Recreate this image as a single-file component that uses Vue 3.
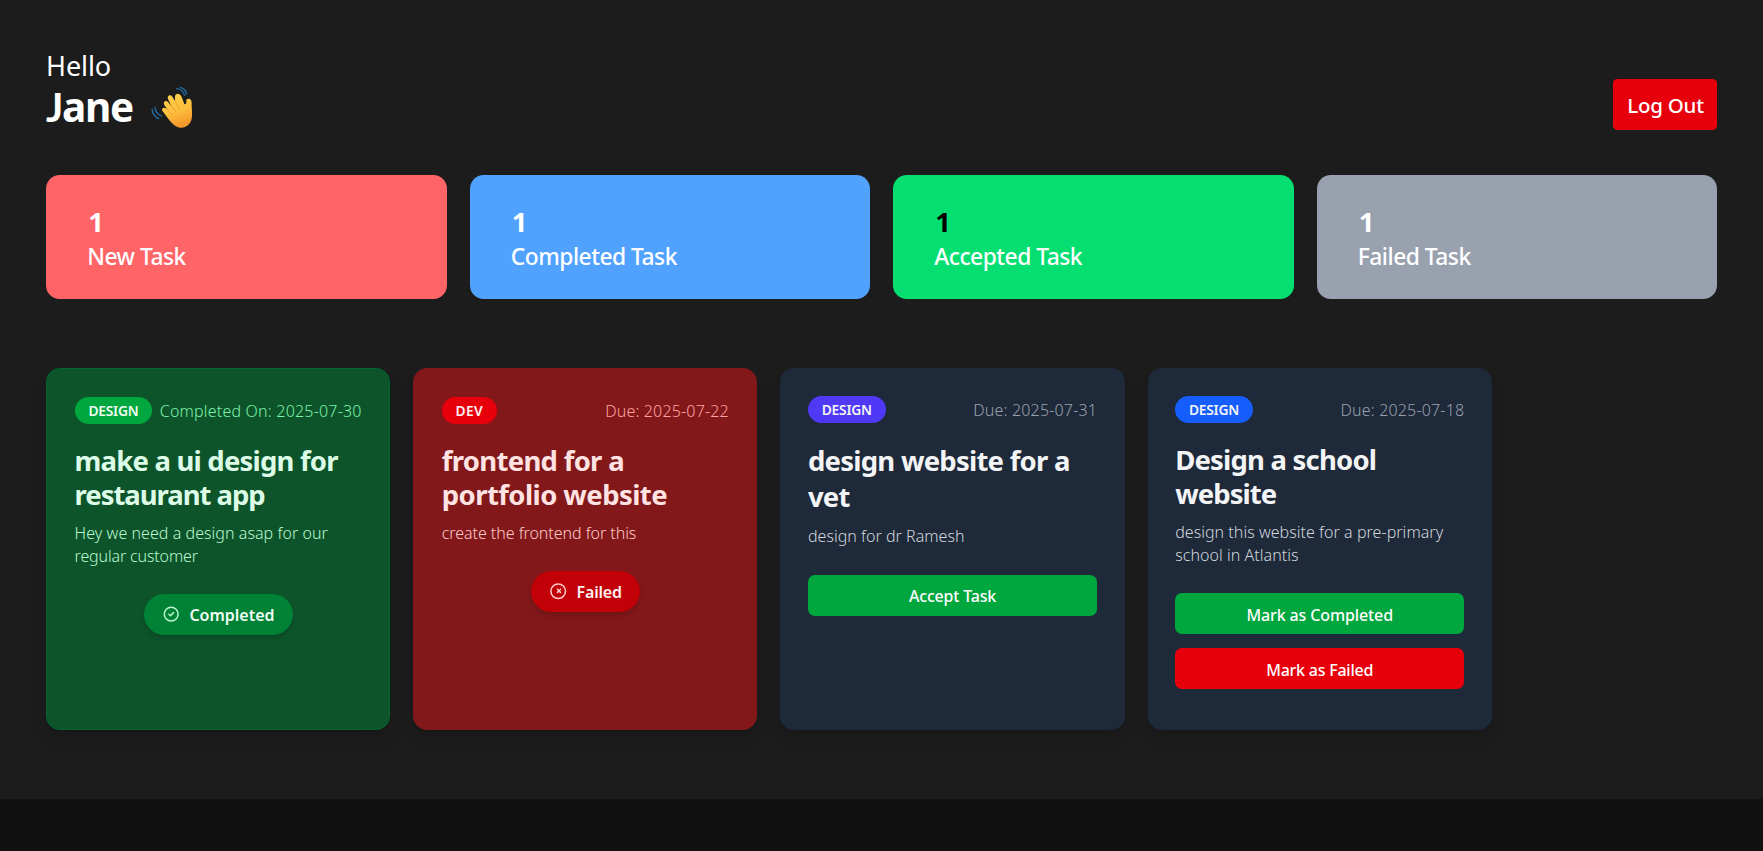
<script setup>
const stats = [
  { tone: 'coral', count: 1, label: 'New Task' },
  { tone: 'sky', count: 1, label: 'Completed Task' },
  { tone: 'lime', count: 1, label: 'Accepted Task' },
  { tone: 'slate', count: 1, label: 'Failed Task' },
]

// Each line of text carries its own tracking, in pixels.
const tasks = [
  {
    tone: 'completed',
    tag: 'DESIGN',
    tagTrack: -0.25,
    date: 'Completed On: 2025-07-30',
    dateTrack: 0.2,
    title: [['make a ui design for', -0.8], ['restaurant app', -1.05]],
    text: [['Hey we need a design asap for our', 0.05], ['regular customer', -0.15]],
    status: 'Completed',
    statusTrack: 0,
  },
  {
    tone: 'failed',
    tag: 'DEV',
    tagTrack: 0.35,
    date: 'Due: 2025-07-22',
    dateTrack: 0.17,
    title: [['frontend for a', -0.7], ['portfolio website', -0.58]],
    text: [['create the frontend for this', -0.05]],
    status: 'Failed',
    statusTrack: -0.2,
  },
  {
    tone: 'fresh',
    tag: 'DESIGN',
    tagTrack: -0.25,
    date: 'Due: 2025-07-31',
    dateTrack: 0.17,
    title: [['design website for a', -0.76], ['vet', -0.8]],
    text: [['design for dr Ramesh', 0.02]],
    actions: [{ label: 'Accept Task', kind: 'ok', track: -0.2 }],
  },
  {
    tone: 'active',
    tag: 'DESIGN',
    tagTrack: -0.25,
    date: 'Due: 2025-07-18',
    dateTrack: 0.17,
    title: [['Design a school', -0.8], ['website', -0.95]],
    text: [['design this website for a pre-primary', 0.04], ['school in Atlantis', 0.05]],
    actions: [
      { label: 'Mark as Completed', kind: 'ok', track: -0.12 },
      { label: 'Mark as Failed', kind: 'bad', track: -0.22 },
    ],
  },
]

const track = (px) => ({ letterSpacing: px + 'px' })
</script>

<template>
  <main class="dashboard">
    <header class="header">
      <div class="greeting">
        <p class="hello">Hello</p>
        <div class="who">
          <h1 class="name">Jane</h1>
          <svg class="wave" viewBox="0 0 126 126" aria-hidden="true">
            <defs>
              <linearGradient id="skin" x1="0" y1="0" x2="0.3" y2="1">
                <stop offset="0" stop-color="#ffd04c" />
                <stop offset="0.6" stop-color="#fdbf3e" />
                <stop offset="1" stop-color="#f59a2c" />
              </linearGradient>
            </defs>
            <g fill="none" stroke="#1f6ea8" stroke-width="4" stroke-linecap="round">
              <path d="M77 8 Q95 10 101 28" />
              <path d="M88 4 Q105 10 107 24" />
              <path d="M12 64 Q14 83 31 90" />
              <path d="M3 70 Q6 90 23 98" />
            </g>
            <path
              fill="url(#skin)"
              d="M35 76 C30 69 37 61 45 67 L49 70 L40 57 C35 49 44 41 51 48 L61 60 L51 39 C47 29 58 23 64 32
                 L72 45 L72 33 C72 21 86 20 91 31 L100 54 C104 56 106 53 106 49 C104 39 110 37 116 39
                 C123 42 122 50 122 57 C122 69 124 78 123 91 C122 113 107 126 89 125
                 C75 124 66 115 57 105 Z"
            />
            <g fill="none" stroke="#e48f24" stroke-width="2.5" stroke-linecap="round" opacity="0.75">
              <path d="M49 70 L62 86" />
              <path d="M61 60 L74 77" />
              <path d="M72 45 L86 69" />
            </g>
          </svg>
        </div>
      </div>
      <button class="logout">Log Out</button>
    </header>

    <section class="stats">
      <article v-for="s in stats" :key="s.label" class="stat" :class="s.tone">
        <h2 class="count">{{ s.count }}</h2>
        <h3 class="label">{{ s.label }}</h3>
      </article>
    </section>

    <section class="tasks">
      <article v-for="(t, i) in tasks" :key="i" class="task" :class="t.tone">
        <div class="meta">
          <span class="tag" :style="track(t.tagTrack)">{{ t.tag }}</span>
          <span class="date" :style="track(t.dateTrack)">{{ t.date }}</span>
        </div>
        <h2 class="title">
          <span v-for="l in t.title" :key="l[0]" :style="track(l[1])">{{ l[0] }}</span>
        </h2>
        <p class="text">
          <span v-for="l in t.text" :key="l[0]" :style="track(l[1])">{{ l[0] }}</span>
        </p>
        <div v-if="t.status" class="status">
          <svg v-if="t.tone === 'completed'" class="icon" viewBox="0 0 24 24">
            <circle cx="12" cy="12" r="9" />
            <path d="M9 12l2 2 4-4" />
          </svg>
          <svg v-else class="icon" viewBox="0 0 24 24">
            <circle cx="12" cy="12" r="9.5" />
            <path d="M11 9.5l4 4M15 9.5l-4 4" />
          </svg>
          <span :style="track(t.statusTrack)">{{ t.status }}</span>
        </div>
        <div v-if="t.actions" class="actions">
          <button
            v-for="a in t.actions"
            :key="a.label"
            class="action"
            :class="a.kind"
            :style="track(a.track)"
          >{{ a.label }}</button>
        </div>
      </article>
    </section>
  </main>
</template>

<style>
body {
  background: #111;
}
</style>

<style scoped>
.dashboard {
  box-sizing: border-box;
  height: 799px;
  padding: 46px;
  background: #1c1c1c;
  color: #fff;
  font-family: 'Noto Sans', 'Open Sans', sans-serif;
}
h1, h2, h3, p { margin: 0; }
button {
  border: 0;
  color: #fff;
  font-family: inherit;
}

.header {
  display: flex;
  align-items: flex-end;
  justify-content: space-between;
  height: 83.5px;
}
.hello {
  font-size: 27px;
  line-height: 37px;
  letter-spacing: -0.1px;
}
.who {
  display: flex;
}
.name {
  width: 105px;
  font-size: 40.5px;
  font-weight: 700;
  line-height: 46px;
  letter-spacing: -1.3px;
}
.name::first-letter {
  font-family: Lato, sans-serif;
}
.wave {
  width: 42px;
  height: 42px;
  margin-top: 2.5px;
}
.logout {
  width: 104px;
  height: 51px;
  padding: 1px 0 0 1px;
  border-radius: 4.5px;
  background: #e7000b;
  font-size: 20.5px;
  font-weight: 500;
  letter-spacing: -0.25px;
}

.stats {
  display: grid;
  grid-template-columns: repeat(4, 1fr);
  gap: 23px;
  margin-top: 45.5px;
}
.stat {
  box-sizing: border-box;
  height: 124px;
  padding: 29px 41.3px 0;
  border-radius: 13.8px;
}
.coral { background: #ff6467; }
.sky { background: #51a2ff; }
.lime { background: #05df72; }
.slate { background: #99a1af; }
.count {
  padding-left: 1px;
  font-size: 27.5px;
  font-weight: 700;
  line-height: 36.7px;
}
.lime .count { color: #000; }
.label {
  font-size: 22.8px;
  font-weight: 500;
  line-height: 32.1px;
  letter-spacing: -0.5px;
}

.tasks {
  display: flex;
  gap: 22.9px;
  margin-top: 69px;
}
.task {
  box-sizing: border-box;
  width: 344.3px;
  height: 362px;
  padding: 27.6px;
  border-radius: 13.8px;
  background: #1e2939;
  box-shadow: 0 11px 17px -3px rgba(0, 0, 0, 0.1), 0 4px 7px -4px rgba(0, 0, 0, 0.1);
}
.task.completed {
  border: 1px solid #016630;
  background: #0d542b;
  color: #b9f8cf;
}
.task.failed {
  border: 1px solid #82181a;
  background: #82181a;
  color: #ffc9c9;
}
.meta {
  display: flex;
  align-items: center;
  justify-content: space-between;
}
.tag {
  padding: 0 13.8px;
  border-radius: 14px;
  color: #f3f4f6;
  font-size: 13.8px;
  font-weight: 600;
  line-height: 27.6px;
}
.completed .tag { background: #00a63e; color: #f0fdf4; }
.failed .tag { background: #e7000b; color: #fef2f2; }
.fresh .tag { background: #4f39f6; }
.active .tag { background: #155dfc; }
.date {
  padding-top: 2px;
  color: #99a1af;
  font-size: 16px;
  font-weight: 300;
  line-height: 23px;
  white-space: nowrap;
}
.completed .date { color: #7bf1a8; }
.failed .date { color: #ffa2a2; }
.title {
  margin-top: 19.6px;
  color: #f3f4f6;
  font-size: 27.5px;
  font-weight: 700;
  line-height: 34.4px;
}
.fresh .title { line-height: 36.7px; }
.completed .title { color: #dcfce7; }
.failed .title { color: #ffe2e2; }
.title span,
.text span {
  display: block;
  white-space: nowrap;
}
.text {
  margin-top: 9.2px;
  color: #d1d5dc;
  font-size: 16px;
  font-weight: 300;
  line-height: 23px;
}
.completed .text { color: #b9f8cf; }
.failed .text { color: #ffc9c9; }
.status {
  display: flex;
  align-items: center;
  gap: 9.3px;
  box-sizing: border-box;
  width: fit-content;
  height: 41.5px;
  margin: 26.2px auto 0;
  padding: 1px 18px 0;
  border-radius: 21px;
  background: #008236;
  box-shadow: 0 4px 6px -1px rgba(0, 0, 0, 0.12), 0 2px 4px -2px rgba(0, 0, 0, 0.12);
  color: #f0fdf4;
  font-size: 16px;
  font-weight: 600;
}
.failed .status { background: #c10007; color: #fef2f2; }
.icon {
  width: 18.4px;
  height: 18.4px;
  margin-top: -3px;
  fill: none;
  stroke: #b9f8cf;
  stroke-width: 2;
  stroke-linecap: round;
  stroke-linejoin: round;
}
.failed .icon { stroke: #ffc9c9; }
.actions {
  display: grid;
  gap: 13.7px;
  margin-top: 26.2px;
}
.action {
  height: 41.4px;
  padding: 2px 0 0;
  border-radius: 6.9px;
  font-size: 16px;
  font-weight: 500;
}
.ok { background: #00a63e; }
.bad { background: #e7000b; }
</style>
